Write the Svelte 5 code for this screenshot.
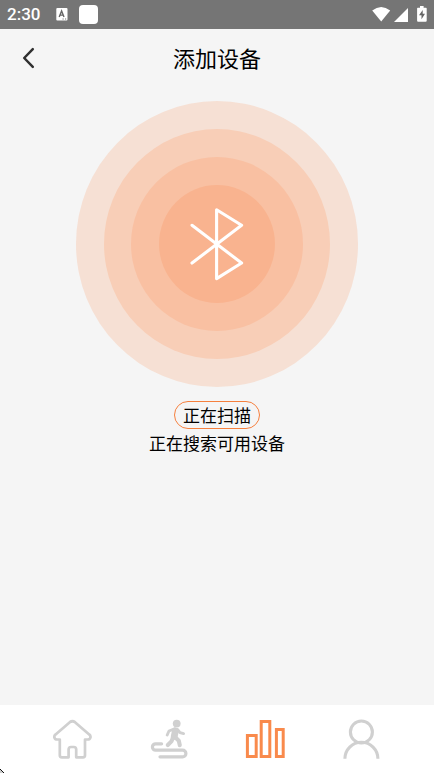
<script>
  const rings = [
    { rx: 141, ry: 143, fill: '#f6e0d4' },
    { rx: 113, ry: 115, fill: '#f8ceb7' },
    { rx: 86, ry: 87, fill: '#f9c0a2' },
    { rx: 58, ry: 59, fill: '#f9b38f' }
  ];
  const tabs = [
    { id: 'home', label: '首页' },
    { id: 'sport', label: '运动' },
    { id: 'stats', label: '数据' },
    { id: 'user', label: '我的' }
  ];
  let active = $state('stats');
</script>

<div class="app">
  <div class="status">
    <span class="time">2:30</span>
    <svg class="note" width="12" height="14" viewBox="0 0 12 14" aria-hidden="true">
      <rect x="0.3" y="1" width="11.2" height="12.5" rx="1" fill="#fff" />
      <path d="M3.2 10 5.6 4 8 10M4 8.1h3.2" fill="none" stroke="#666" stroke-width="1.4" />
      <path d="M6.5 12h1.2M9 12h1.2" stroke="#777" />
    </svg>
    <span class="square"></span>
    <svg class="system" width="56" height="18" viewBox="0 0 56 18" aria-hidden="true">
      <path d="M0.2 5.6Q9.2-1.4 18.2 5.6L9.2 16.6Z" fill="#fff" />
      <path d="M22 17 36 3V17Z" fill="#fff" />
      <path d="M48 1h3.6v1.7H54q0.7 0 0.7 0.7V15.8q0 1-1 1h-7.6q-1 0-1-1V3.4q0-0.7 0.7-0.7H48Z" fill="#fff" />
      <path d="M50.7 5 47 10.3h2.5v4L53 8.8h-2.3Z" fill="#666" />
    </svg>
  </div>

  <header>
    <button class="back" aria-label="返回">
      <svg width="14" height="22" viewBox="0 0 14 22" aria-hidden="true">
        <path d="M11.8 2.2 3.2 11l8.6 8.8" fill="none" stroke="#303030" stroke-width="2.5" stroke-linecap="round" stroke-linejoin="round" />
      </svg>
    </button>
    <h1>添加设备</h1>
  </header>

  <main>
    <svg class="radar" width="282" height="286" viewBox="0 0 282 286" aria-hidden="true">
      {#each rings as ring}
        <ellipse cx="141" cy="143" rx={ring.rx} ry={ring.ry} fill={ring.fill} />
      {/each}
      <path d="M116 124.3 165.6 162 140.6 177.6V108.8L165.6 124.3 116 162" fill="none" stroke="#fff" stroke-width="3.1" stroke-linecap="round" stroke-linejoin="round" />
    </svg>
    <button class="scan">正在扫描</button>
    <p>正在搜索可用设备</p>
  </main>

  <nav>
    {#each tabs as tab}
      <button class="tab" class:active={active === tab.id} aria-label={tab.label} onclick={() => (active = tab.id)}>
        <svg width="40" height="40" viewBox="0 0 40 40" fill="none" stroke="currentColor" aria-hidden="true">
          {#if tab.id === 'home'}
            <path stroke-width="2.7" stroke-linejoin="round" d="M6.8 20.5H4.2C1.2 20.5 .3 17.2 2.6 15.4L16.8 3.2Q19.4 1.3 22 3.2L36.2 15.4C38.5 17.2 37.6 20.5 34.6 20.5H32V36.3Q32 38.3 30 38.3H23.2V30.5Q23.2 28 20.8 28H18Q15.6 28 15.6 30.5V38.3H8.8Q6.8 38.3 6.8 36.3Z" />
          {:else if tab.id === 'sport'}
            <g stroke-linecap="round" stroke-linejoin="round">
              <circle cx="27.7" cy="4.6" r="3.9" fill="currentColor" stroke="none" />
              <path stroke-width="6.8" d="M26.4 12 25.2 17.4" />
              <path stroke-width="2.9" d="M25.5 9.8 20 12 18.2 16M28.5 10.5 31 13.6 34.6 14.6" />
              <path stroke-width="4.1" d="M24.4 17.5 22.4 22.4 18.8 26M26 18 29.8 21.8 30.8 26.2" />
              <path stroke-width="3.2" d="M12.6 24.8H6.6a3.2 3.2 0 0 0 0 6.4H33.6a3.3 3.3 0 0 1 0 6.6H11" />
            </g>
          {:else if tab.id === 'stats'}
            <path stroke-width="3" d="M2.4 16.6H11.2V37.6H2.4ZM16.2 2.6H24.8V37.6H16.2ZM31.4 10.4H38.2V37.6H31.4Z" />
          {:else}
            <circle cx="20.4" cy="13" r="11" stroke-width="3.1" />
            <path stroke-width="3.1" d="M3.9 39.7A16.5 16.5 0 0 1 36.9 39.7" />
          {/if}
        </svg>
      </button>
    {/each}
  </nav>

  <svg class="pointer" width="4" height="4" viewBox="0 0 4 4" shape-rendering="crispEdges" aria-hidden="true">
    <path d="M0 1h2v3H0ZM2 3h1v1H2Z" fill="#ccc" />
    <path d="M0 0h1v1H0ZM1 1h1v1H1ZM2 2h1v1H2ZM3 3h1v1H3Z" fill="#111" />
  </svg>
</div>

<style>
  :global(body) {
    margin: 0;
  }
  .app {
    position: relative;
    display: flex;
    flex-direction: column;
    min-height: 100vh;
    background: #f5f5f5;
    color: #000;
    font-family: 'Noto Sans CJK SC', 'Noto Sans', sans-serif;
  }
  button {
    padding: 0;
    border: 0;
    background: none;
    color: inherit;
    font: inherit;
    cursor: pointer;
  }
  svg {
    display: block;
  }
  .status {
    display: flex;
    align-items: center;
    box-sizing: border-box;
    height: 29px;
    padding: 0 6px 1px 7px;
    background: #757575;
  }
  .time {
    color: #fff;
    font: 500 17px/28px Roboto, sans-serif;
  }
  .note {
    margin-left: 16px;
  }
  .square {
    width: 19px;
    height: 19px;
    margin-left: 11px;
    border-radius: 4px;
    background: #fff;
  }
  .system {
    margin-left: auto;
  }
  header {
    display: grid;
    grid-template-columns: 56px 1fr 56px;
    align-items: center;
    height: 58px;
  }
  .back {
    display: flex;
    align-items: center;
    justify-content: center;
    height: 48px;
  }
  h1 {
    margin: 0;
    padding-bottom: 2px;
    font-size: 22px;
    font-weight: 400;
    line-height: 32px;
    text-align: center;
  }
  main {
    display: flex;
    flex: 1;
    flex-direction: column;
    align-items: center;
    padding-top: 14px;
  }
  .scan {
    box-sizing: border-box;
    height: 28px;
    margin-top: 14px;
    padding: 0 8px;
    border: 1px solid #f5803e;
    border-radius: 14px;
    font-size: 17px;
    line-height: 26px;
  }
  p {
    margin: 0;
    font-size: 17px;
    line-height: 28px;
  }
  nav {
    display: flex;
    height: 68px;
    padding: 0 25px;
    background: #fff;
  }
  .tab {
    display: flex;
    flex: 1;
    align-items: center;
    justify-content: center;
    color: #d0d0d0;
  }
  .tab.active {
    color: #f98a4c;
  }
  .pointer {
    position: absolute;
    bottom: 0;
    left: 0;
  }
</style>
